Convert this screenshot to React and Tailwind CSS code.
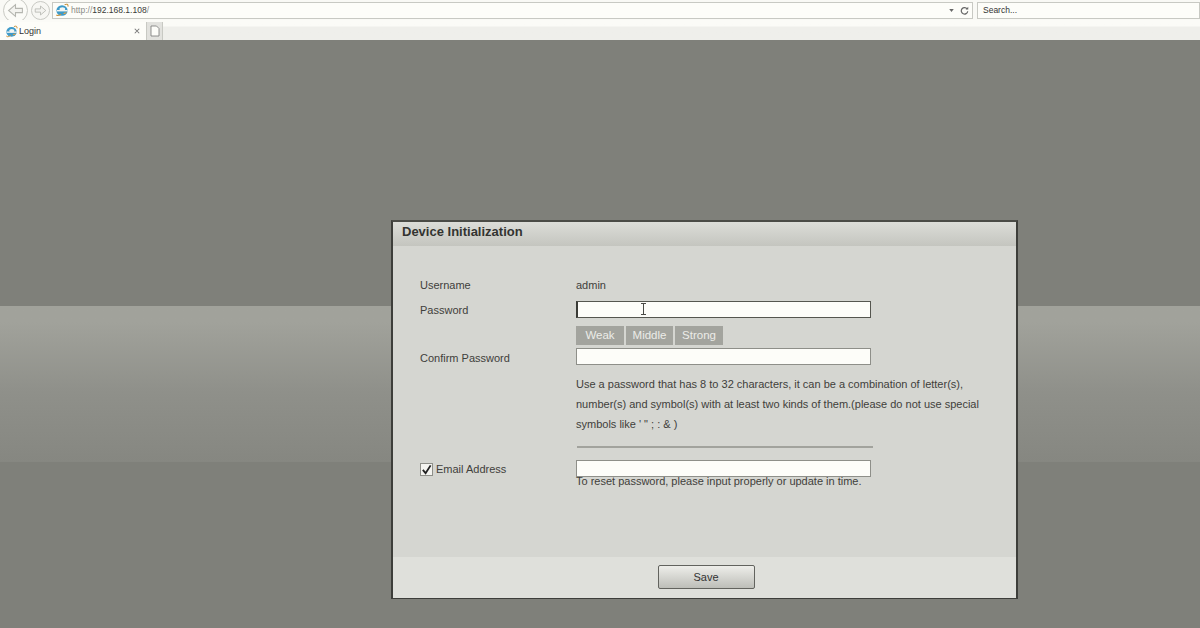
import React from 'react';

const IeIcon = ({ className }) => (
  <svg viewBox="0 0 16 16" className={className}>
    <ellipse cx="8" cy="8.5" rx="6.4" ry="6" fill="#3d9ac9" />
    <ellipse cx="8.4" cy="7" rx="3.2" ry="2.2" fill="#f4f6f2" />
    <rect x="2.2" y="8" width="12.2" height="1.6" fill="#f4f6f2" />
    <path d="M9 12.4 C11 12.8 12.8 12 13.8 10.8 L10.8 10.8 C10.4 11.5 9.8 12 9 12.4 Z" fill="#e8a33c" />
    <path d="M1.6 13.6 C3 15.2 5 14.2 7 12.8 M11 2 C13 0.8 15.4 1.2 14.8 4.2" fill="none" stroke="#c9923c" strokeWidth="1.2" />
  </svg>
);

const NavButton = ({ big, flip }) => (
  <div className={big ? 'flex h-[25px] w-[25px] items-center justify-center rounded-full border border-[#c9cac4] bg-[#fbfbf7]' : 'flex h-[19px] w-[19px] items-center justify-center rounded-full border border-[#c9cac4] bg-[#f7f7f3]'}>
    <svg viewBox="0 0 16 16" className={big ? 'h-[17px] w-[17px]' : 'h-[13px] w-[13px]'}>
      <path
        d={flip ? 'M1.5 6 H8 V2.5 L14.5 8 L8 13.5 V10 H1.5 Z' : 'M14.5 6 H8 V2.5 L1.5 8 L8 13.5 V10 H14.5 Z'}
        fill="#f3f3ef"
        stroke="#b5b6b0"
        strokeWidth="1"
      />
    </svg>
  </div>
);

const Field = ({ label, low, children }) => (
  <div className="flex h-[25px] items-center">
    <div className={low ? 'w-[156px] pt-[4px]' : 'w-[156px] pt-[2px]'}>{label}</div>
    {children}
  </div>
);

const TextBox = ({ active }) => (
  <div className={active
    ? 'relative h-[17px] w-[295px] border border-[#55564f] border-l-2 border-l-[#3a3b36] bg-[#fdfdf9]'
    : 'relative h-[17px] w-[295px] border border-[#8e8f89] bg-[#fdfdf9]'}>
    {active && (
      <svg viewBox="0 0 7 12" className="absolute top-[1px] left-[62px] h-[12px] w-[7px]">
        <path d="M1 0.5 H6 M3.5 0.5 V11.5 M1 11.5 H6" fill="none" stroke="#4a4a46" strokeWidth="1" />
      </svg>
    )}
  </div>
);

const Strength = ({ text, width }) => (
  <div className={`flex h-[19px] items-center justify-center bg-[#a3a49e] text-[11.5px] text-[#ecece8] ${width}`}>{text}</div>
);

export default function App() {
  return (
    <div className="relative flex h-[628px] w-[1200px] flex-col overflow-hidden bg-[#7f807a] font-['Liberation_Sans',Arial,sans-serif]">
      {/* browser toolbar */}
      <div className="flex h-[20px] items-center bg-[#f9f9f5] pl-[3px]">
        <NavButton big />
        <div className="ml-[3px]"><NavButton flip /></div>
        <div className="ml-[2px] flex h-[17px] w-[921px] items-center border border-[#c8c9c3] bg-[#fdfdf9] pl-[2px]">
          <IeIcon className="h-[14px] w-[14px]" />
          <span className="ml-[2px] mt-[1px] text-[8.5px] text-[#8b8b87]">http://<span className="text-[#3a3a38]">192.168.1.108</span>/</span>
          <span className="ml-auto mr-[3px] flex items-center gap-[3px]">
            <svg viewBox="0 0 6 4" className="h-[3px] w-[5px]"><path d="M0 0 H6 L3 4 Z" fill="#666" /></svg>
            <svg viewBox="0 0 12 12" className="ml-[3px] h-[9px] w-[9px]"><path d="M9.6 4 A4.3 4.3 0 1 0 10.3 7" fill="none" stroke="#666" strokeWidth="1.6" /><path d="M7.6 4.6 H11 V1 Z" fill="#666" /></svg>
          </span>
        </div>
        <div className="ml-[4px] flex h-[17px] flex-1 items-center border border-[#c8c9c3] bg-[#fdfdf9] pl-[5px] text-[8.5px] text-[#333]">Search...</div>
      </div>

      {/* tab strip */}
      <div className="flex h-[20px] items-end bg-gradient-to-b from-[#fbfbf7] from-30% to-[#efefeb] to-35%">
        <div className="flex h-[18px] w-[146px] items-center bg-[#fdfdf9] pl-[5px] pr-[6px]">
          <IeIcon className="h-[13px] w-[13px]" />
          <span className="ml-[1px] mt-[2px] text-[9px] text-[#333]">Login</span>
          <svg viewBox="0 0 8 8" className="ml-auto h-[6px] w-[6px]"><path d="M1 1 L7 7 M7 1 L1 7" stroke="#777" strokeWidth="1.4" /></svg>
        </div>
        <div className="flex h-[18px] w-[17px] items-center justify-center border-x border-[#c8c9c3] bg-[#e2e2de]">
          <svg viewBox="0 0 10 12" className="h-[12px] w-[10px]"><path d="M1 1 H6.5 L9 3.5 V11 H1 Z" fill="#fdfdf9" stroke="#777" strokeWidth="0.8" /></svg>
        </div>
      </div>

      {/* page backdrop */}
      <div className="h-[266px] bg-[#7f807a]" />
      <div className="h-[156px] bg-gradient-to-b from-[#a1a29b] from-10% via-[#8f908a] via-55% to-[#868781]" />
      <div className="flex-1 bg-[#7f807a]" />

      {/* dialog */}
      <div className="absolute top-[220px] left-[391px] flex h-[379px] w-[627px] flex-col border-2 border-b border-[#3d3e3a] border-t-[#4a4b46] bg-[#d5d6d1] shadow-[inset_0_-1px_0_#f4f4f0]">
        <div className="flex h-[24px] items-center bg-gradient-to-b from-[#dcddd8] to-[#c4c5bf] pb-[4px] pl-[9px] text-[13px] font-bold text-[#333431]">
          Device Initialization
        </div>

        <div className="flex-1 pt-[26px] pl-[27px] text-[11px] text-[#3f403b]">
          <Field label="Username"><span className="pt-[2px]">admin</span></Field>
          <Field label="Password"><TextBox active /></Field>
          <div className="mt-[4px] ml-[156px] flex h-[19px] gap-[2px]">
            <Strength text="Weak" width="w-[48px]" />
            <Strength text="Middle" width="w-[47px]" />
            <Strength text="Strong" width="w-[48px]" />
          </div>
          <div className="mt-[-1px]"><Field low label="Confirm Password"><TextBox /></Field></div>
          <div className="ml-[156px] mt-[5px] w-[430px] text-[11px] leading-[20px]">
            Use a password that has 8 to 32 characters, it can be a combination of letter(s),<br />
            number(s) and symbol(s) with at least two kinds of them.(please do not use special<br />
            symbols like ' " ; : &amp; )
          </div>
          <div className="ml-[157px] mt-[12px] h-[2px] w-[296px] bg-[#a2a39d]" />
          <div className="mt-[8px]">
            <Field label={
              <span className="flex items-center gap-[3px]">
                <span className="flex h-[13px] w-[13px] items-center justify-center border border-[#8e8f89] bg-[#f4f4f0]">
                  <svg viewBox="0 0 12 12" className="h-[11px] w-[11px]"><path d="M2 6.5 L5 10 L10.5 1.5" fill="none" stroke="#222" strokeWidth="2" /></svg>
                </span>
                Email Address
              </span>
            }><TextBox /></Field>
          </div>
          <div className="ml-[156px] mt-[-6px] text-[11px] leading-[12px]">To reset password, please input properly or update in time.</div>
        </div>

        <div className="flex h-[41px] items-center justify-center bg-[#dfe0db] pb-[1px] pl-[3px]">
          <button className="h-[24px] w-[97px] rounded-[2px] border border-[#62635e] bg-gradient-to-b from-[#eeeeea] to-[#bdbeb8] text-[11px] text-[#333]">Save</button>
        </div>
      </div>
    </div>
  );
}
